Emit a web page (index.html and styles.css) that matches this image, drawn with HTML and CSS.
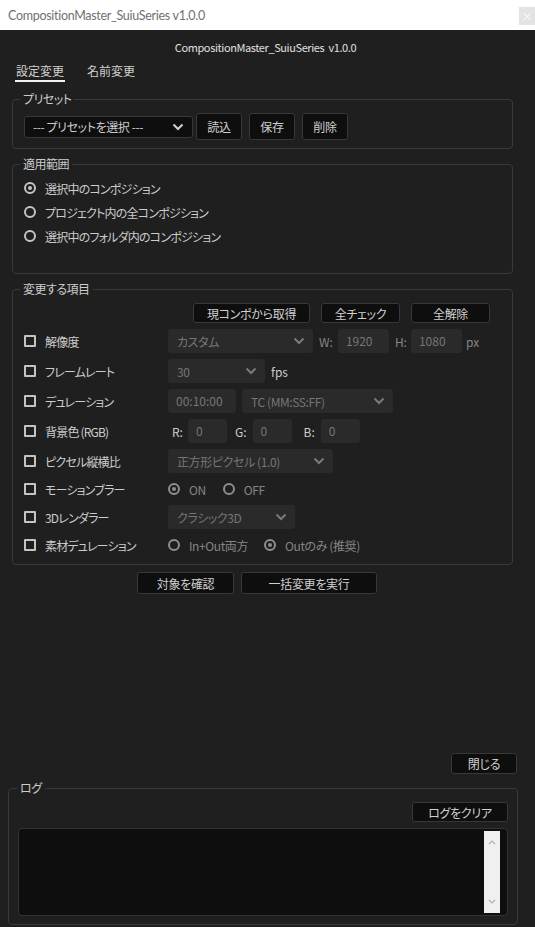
FILE: index.html
```html
<!DOCTYPE html>
<html lang="ja">
<head>
  <meta charset="UTF-8">
  <meta name="viewport" content="width=device-width, initial-scale=1.0">
  <title>CompositionMaster_SuiuSeries v1.0.0</title>
  <link rel="stylesheet" href="styles.css">
</head>
<body>
  <!-- Window title bar -->
  <div class="titlebar">
    <span class="titlebar-text">CompositionMaster_SuiuSeries v1.0.0</span>
    <span class="titlebar-close">×</span>
  </div>

  <div class="panel">
    <div class="app-title">CompositionMaster_SuiuSeries&nbsp; v1.0.0</div>

    <div class="tabs">
      <span class="tab active">設定変更</span>
      <span class="tab">名前変更</span>
    </div>

    <!-- Preset -->
    <fieldset class="group preset">
      <legend>プリセット</legend>
      <div class="preset-row">
        <div class="select dark w-preset">
          <span>--- プリセットを選択 ---</span>
          <svg class="chev" width="12" height="8" viewBox="0 0 12 8"><polyline points="1.5,1.5 6,6 10.5,1.5"/></svg>
        </div>
        <button class="btn btn-preset first">読込</button>
        <button class="btn btn-preset">保存</button>
        <button class="btn btn-preset">削除</button>
      </div>
    </fieldset>

    <!-- Scope -->
    <fieldset class="group scope">
      <legend>適用範囲</legend>
      <label class="radio-row"><span class="radio on"></span>選択中のコンポジション</label>
      <label class="radio-row"><span class="radio"></span>プロジェクト内の全コンポジション</label>
      <label class="radio-row"><span class="radio"></span>選択中のフォルダ内のコンポジション</label>
    </fieldset>

    <!-- Items -->
    <fieldset class="group items">
      <legend>変更する項目</legend>
      <div class="items-actions">
        <button class="btn btn-small w-get">現コンポから取得</button>
        <button class="btn btn-small w-all">全チェック</button>
        <button class="btn btn-small w-all">全解除</button>
      </div>

      <div class="item-row">
        <div class="item-name"><span class="check"></span>解像度</div>
        <div class="select w-res"><span>カスタム</span><svg class="chev" width="12" height="8" viewBox="0 0 12 8"><polyline points="1.5,1.5 6,6 10.5,1.5"/></svg></div>
        <span class="unit dim u-w">W:</span>
        <div class="input w-size">1920</div>
        <span class="unit dim u-h">H:</span>
        <div class="input w-size">1080</div>
        <span class="unit dim u-px">px</span>
      </div>

      <div class="item-row">
        <div class="item-name"><span class="check"></span>フレームレート</div>
        <div class="select w-fps"><span>30</span><svg class="chev" width="12" height="8" viewBox="0 0 12 8"><polyline points="1.5,1.5 6,6 10.5,1.5"/></svg></div>
        <span class="unit u-fps">fps</span>
      </div>

      <div class="item-row">
        <div class="item-name"><span class="check"></span>デュレーション</div>
        <div class="input w-dur">00:10:00</div>
        <div class="select w-tc"><span>TC (MM:SS:FF)</span><svg class="chev" width="12" height="8" viewBox="0 0 12 8"><polyline points="1.5,1.5 6,6 10.5,1.5"/></svg></div>
      </div>

      <div class="item-row">
        <div class="item-name"><span class="check"></span>背景色 (RGB)</div>
        <span class="unit u-r">R:</span>
        <div class="input w-rgb">0</div>
        <span class="unit u-g">G:</span>
        <div class="input w-rgb">0</div>
        <span class="unit u-b">B:</span>
        <div class="input w-rgb">0</div>
      </div>

      <div class="item-row">
        <div class="item-name"><span class="check"></span>ピクセル縦横比</div>
        <div class="select w-par"><span>正方形ピクセル (1.0)</span><svg class="chev" width="12" height="8" viewBox="0 0 12 8"><polyline points="1.5,1.5 6,6 10.5,1.5"/></svg></div>
      </div>

      <div class="item-row short">
        <div class="item-name"><span class="check"></span>モーションブラー</div>
        <span class="radio dim on"></span><span class="opt dim o-on">ON</span>
        <span class="radio dim"></span><span class="opt dim">OFF</span>
      </div>

      <div class="item-row">
        <div class="item-name"><span class="check"></span>3Dレンダラー</div>
        <div class="select w-3d"><span>クラシック3D</span><svg class="chev" width="12" height="8" viewBox="0 0 12 8"><polyline points="1.5,1.5 6,6 10.5,1.5"/></svg></div>
      </div>

      <div class="item-row short">
        <div class="item-name"><span class="check"></span>素材デュレーション</div>
        <span class="radio dim"></span><span class="opt dim o-inout">In+Out両方</span>
        <span class="radio dim on"></span><span class="opt dim">Outのみ (推奨)</span>
      </div>
    </fieldset>

    <div class="run-row">
      <button class="btn btn-run w-check">対象を確認</button>
      <button class="btn btn-run w-exec">一括変更を実行</button>
    </div>

    <div class="close-row">
      <button class="btn btn-close">閉じる</button>
    </div>

    <!-- Log -->
    <fieldset class="group log">
      <legend>ログ</legend>
      <div class="log-actions">
        <button class="btn btn-small w-clear">ログをクリア</button>
      </div>
      <div class="log-box">
        <div class="scrollbar">
          <svg width="8" height="6" viewBox="0 0 8 6"><polyline points="1,5 4,2 7,5"/></svg>
          <svg width="8" height="6" viewBox="0 0 8 6"><polyline points="1,1 4,4 7,1"/></svg>
        </div>
      </div>
    </fieldset>
  </div>
</body>
</html>
```

FILE: styles.css
```css
* {
  box-sizing: border-box;
}

body {
  margin: 0;
  background: #1f1f1f;
  font-family: "Noto Sans CJK JP", "Noto Sans", sans-serif;
  font-feature-settings: "palt";
  font-size: 12px;
  color: #cccccc;
}

/* Title bar */
.titlebar {
  height: 30px;
  background: #ffffff;
  display: flex;
  align-items: center;
  justify-content: space-between;
  padding-left: 8px;
}

.titlebar-text {
  font-family: "Lato", "Noto Sans", sans-serif;
  font-size: 12.5px;
  letter-spacing: -0.3px;
  color: #707070;
}

.titlebar-close {
  width: 16px;
  height: 18px;
  margin-top: 2px;
  background: #e3e3e3;
  color: #ffffff;
  font-size: 11px;
  line-height: 18px;
  text-align: center;
}

/* Panel */
.panel {
  height: 897px;
  padding: 0 22px 0 12px;
  overflow: hidden;
}

.app-title {
  margin-top: 8px;
  height: 18px;
  line-height: 18px;
  text-align: center;
  font-size: 11px;
  letter-spacing: -0.4px;
  color: #e0e0e0;
  padding-left: 6px;
}

.tabs {
  display: flex;
  gap: 21px;
  margin: 7px 0 0 3px;
}

.tab {
  line-height: 16px;
  padding: 0 1px 1px;
  border-bottom: 2px solid transparent;
  color: #d0d0d0;
}

.tab.active {
  border-bottom-color: #f2f2f2;
}

/* Group boxes */
.group {
  margin: 0;
  min-width: 0;
  border: 1px solid #393939;
  border-radius: 4px;
  padding: 6px 11px 8px;
}

.group legend {
  padding: 0 3px;
  margin-left: -4px;
  line-height: 16px;
  letter-spacing: -0.5px;
  color: #cccccc;
}

.preset {
  margin-top: 9px;
}

.scope {
  margin-top: 7px;
  padding: 4px 11px 25px;
}

.items {
  margin-top: 7px;
  padding: 6px 22px 9px 11px;
}

/* Controls */
.btn {
  font-family: inherit;
  font-feature-settings: "palt";
  font-size: 12px;
  letter-spacing: -0.3px;
  color: #d0d0d0;
  background: #0e0e0e;
  border: 1px solid #383838;
  border-radius: 3px;
  padding: 0;
  cursor: pointer;
}

.preset-row {
  display: flex;
  align-items: center;
  gap: 7px;
  height: 27px;
}

.btn-preset {
  width: 46px;
  height: 27px;
}

.btn-preset.first {
  margin-left: -4px;
}

.select {
  display: flex;
  align-items: center;
  justify-content: space-between;
  height: 24px;
  padding: 0 8px 0 9px;
  background: #2a2a2a;
  border-radius: 3px;
  color: #767676;
  letter-spacing: -0.4px;
  white-space: nowrap;
}

.select.dark {
  height: 22px;
  background: #0e0e0e;
  border: 1px solid #383838;
  color: #cccccc;
  padding-left: 8px;
}

.chev polyline {
  fill: none;
  stroke: #7a7a7a;
  stroke-width: 2;
}

.select.dark .chev polyline {
  stroke: #d0d0d0;
}

.w-preset { width: 169px; }
.w-res { width: 145px; }
.w-fps { width: 97px; }
.w-tc { width: 151px; margin-left: 6px; }
.w-par { width: 165px; }
.w-3d { width: 127px; }

.input {
  height: 24px;
  line-height: 24px;
  padding-left: 8px;
  background: #2a2a2a;
  border-radius: 3px;
  color: #767676;
}

.w-size { width: 51px; }
.w-dur { width: 68px; }
.w-rgb { width: 39px; }

.unit {
  color: #cccccc;
}

.unit.dim {
  color: #858585;
}

.u-w { margin: 0 5px 0 6px; }
.u-h { margin: 0 4px 0 6px; }
.u-px { margin-left: 4px; }
.u-fps { margin-left: 6px; }
.u-r { margin: 0 5px 0 4px; }
.u-g { margin: 0 6px 0 8px; }
.u-b { margin: 0 6px 0 12px; }

/* Radios and checkboxes */
.radio-row {
  display: flex;
  align-items: center;
  height: 24px;
  letter-spacing: -0.8px;
  color: #cccccc;
}

.radio {
  width: 12px;
  height: 12px;
  border: 2px solid #c4c4c4;
  border-radius: 50%;
  display: inline-flex;
  align-items: center;
  justify-content: center;
  flex-shrink: 0;
}

.radio-row .radio {
  margin-right: 9px;
}

.radio.on::after {
  content: "";
  width: 4px;
  height: 4px;
  border-radius: 50%;
  background: #c4c4c4;
}

.radio.dim {
  border-color: #8e8e8e;
}

.radio.dim.on::after {
  background: #8e8e8e;
}

.check {
  width: 12px;
  height: 12px;
  border: 2px solid #c4c4c4;
  border-radius: 1px;
  margin-right: 9px;
  flex-shrink: 0;
}

/* Items rows */
.items-actions {
  display: flex;
  justify-content: flex-end;
  gap: 11px;
}

.btn-small {
  height: 20px;
}

.w-get { width: 117px; }
.w-all { width: 79px; }

.item-row {
  display: flex;
  align-items: center;
  height: 24px;
  margin-top: 6px;
}

.item-row.short {
  height: 20px;
}

.item-name {
  display: flex;
  align-items: center;
  width: 144px;
  letter-spacing: -0.8px;
  color: #cccccc;
}

.opt {
  margin: 0 0 0 9px;
  letter-spacing: -0.4px;
}

.opt.dim {
  color: #858585;
}

.o-on + .radio {
  margin-left: 17px;
}

.o-inout + .radio {
  margin-left: 16px;
}

/* Bottom buttons */
.run-row {
  display: flex;
  justify-content: center;
  gap: 7px;
  margin-top: 7px;
  padding-right: 11px;
}

.btn-run {
  height: 22px;
}

.w-check { width: 97px; }
.w-exec { width: 136px; }

.close-row {
  display: flex;
  justify-content: flex-end;
  margin: 159px -4px 0 0;
}

.btn-close {
  width: 66px;
  height: 21px;
}

/* Log */
.log {
  margin: 6px -5px 0 -4px;
  padding: 6px 9px 8px;
}

.log legend {
  margin-left: -1px;
}

.log-actions {
  display: flex;
  justify-content: flex-end;
}

.w-clear { width: 96px; }

.log-box {
  margin-top: 6px;
  height: 88px;
  background: #0e0e0e;
  border: 1px solid #333333;
  border-radius: 4px;
  display: flex;
  justify-content: flex-end;
  padding: 2px 7px 2px 0;
}

.scrollbar {
  width: 16px;
  background: #f0f0f0;
  display: flex;
  flex-direction: column;
  align-items: center;
  justify-content: space-between;
  padding: 8px 0 8px;
}

.scrollbar polyline {
  fill: none;
  stroke: #b0b0b0;
  stroke-width: 1.2;
}
```
